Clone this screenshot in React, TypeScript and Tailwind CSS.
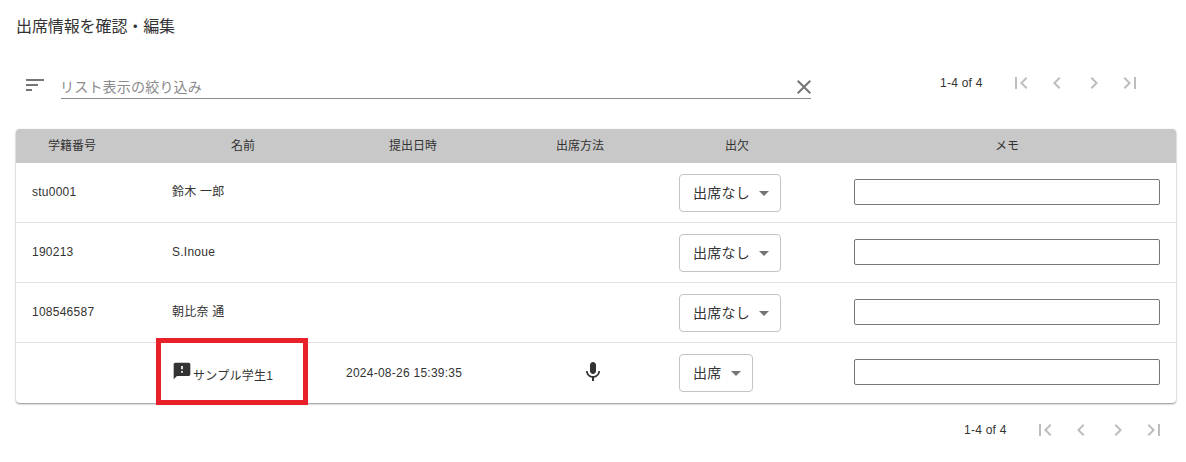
import React from "react";
import { MdSort, MdClose, MdFirstPage, MdLastPage, MdChevronLeft, MdChevronRight, MdFeedback, MdMic, MdArrowDropDown } from "react-icons/md";

const font = "font-['Liberation_Sans','Noto_Sans_CJK_JP',sans-serif]";
const cols = "grid grid-cols-[140px_174px_166px_168px_174px_338px]";

function Pager({ className }: { className: string }) {
  const icons = [MdFirstPage, MdChevronLeft, MdChevronRight, MdLastPage];
  return (
    <div className={`flex items-center text-[12px] tracking-[0.25px] text-[#333] ${className}`}>
      <span className="mr-[26px]">1-4 of 4</span>
      <div className="flex gap-[12.6px] text-[#bdbdbd]">
        {icons.map((I, i) => (
          <I key={i} size={24} />
        ))}
      </div>
    </div>
  );
}

function Status({ label }: { label: string }) {
  return (
    <button className="flex h-[38px] items-center rounded-[4px] border border-[#c4c4c4] bg-white pl-[14px] pr-[4px] text-[14px] text-[#333]">
      <span className="ml-[-1px] mt-[1px]">{label}</span>
      <MdArrowDropDown size={24} className="ml-[2px] text-[#757575]" />
    </button>
  );
}

function Row({ id, name, date, mic, status, last }: { id?: string; name: React.ReactNode; date?: string; mic?: boolean; status: string; last?: boolean }) {
  return (
    <div className={`${cols} items-center text-[12px] tracking-[0.25px] text-[#333] ${last ? "h-[60px]" : "h-[60px] border-b border-[#e0e0e0]"}`}>
      <div className="mb-[2px] pl-4">{id}</div>
      <div className="flex h-full items-center pb-[2px] pl-4">{name}</div>
      <div className="pl-4">{date}</div>
      <div className="mb-[3px] flex justify-center pl-[26px]">{mic && <MdMic size={24} className="text-[#333]" />}</div>
      <div className="flex pl-[15px]">
        <Status label={status} />
      </div>
      <div className="mb-[2px] pl-4">
        <input aria-label="メモ" className="block h-[26px] w-[306px] rounded-[2px] border border-[#767676] bg-white" />
      </div>
    </div>
  );
}

export default function App() {
  return (
    <div className={`${font} h-[462px] w-[1186px] overflow-hidden bg-white pl-4 pt-[18px]`}>
      <h1 className="text-[16px] font-normal leading-[18px] tracking-[-0.1px] text-[#333]">出席情報を確認・編集</h1>

      <div className="mt-[33px] flex h-[57px] items-start">
        <MdSort size={24} className="ml-[7px] mt-[4px] text-[#757575]" />
        <div className="ml-[14px] mt-[7px] flex h-[23px] w-[750px] items-center justify-between border-b border-[#8c8c8c]">
          <span className="ml-[-1px] mt-[1px] text-[14px] tracking-[0.2px] text-[#8a8a8a]">リスト表示の絞り込み</span>
          <MdClose size={24} className="mr-[-5px] shrink-0 text-[#757575]" />
        </div>
        <Pager className="ml-[129px] mt-[2px]" />
      </div>

      <div className="mt-[3px] w-[1160px] overflow-hidden rounded-[4px] shadow-[0_1px_2px_rgba(0,0,0,0.45)]">
        <div className={`${cols} h-[34px] items-center bg-[#c8c8c8] text-center text-[12px] text-[#333]`}>
          <div className="pr-7">学籍番号</div>
          <div>名前</div>
          <div>提出日時</div>
          <div>出席方法</div>
          <div className="pr-7">出欠</div>
          <div>メモ</div>
        </div>
        <Row id="stu0001" name="鈴木 一郎" status="出席なし" />
        <Row id="190213" name="S.Inoue" status="出席なし" />
        <Row id="108546587" name="朝比奈 通" status="出席なし" />
        <Row
          last
          name={
            <>
              <MdFeedback size={20} className="mb-[3px] text-[#333]" />
              <span className="ml-[1px] mt-[7px]">サンプル学生1</span>
            </>
          }
          date="2024-08-26 15:39:35"
          mic
          status="出席"
        />
      </div>

      <Pager className="ml-[948px] mt-[15px]" />

      <div aria-hidden className="absolute left-[156px] top-[338px] h-[67px] w-[152px] border-[5px] border-[#e8202a]" />
    </div>
  );
}
